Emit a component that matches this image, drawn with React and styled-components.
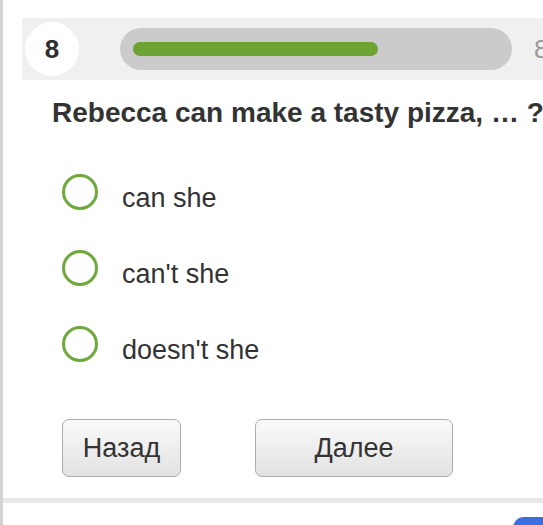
import React from "react";
import styled, { createGlobalStyle } from "styled-components";

const Global = createGlobalStyle`
  html, body { margin: 0; padding: 0; background: #fff; }
  body { font-family: "Liberation Sans", Arial, sans-serif; color: #333; }
`;

const Page = styled.div`
  border-left: 3px solid #d3d3d3;
  height: 525px;
  width: 543px;
  box-sizing: border-box;
  overflow: hidden;
  display: flex;
  flex-direction: column;
`;

const Header = styled.div`
  margin: 18px 0 0 19px;
  height: 62px;
  background: #f0f0f0;
  display: flex;
  align-items: center;
  padding-left: 3px;
  overflow: hidden;
  flex-shrink: 0;
`;

const Badge = styled.div`
  width: 54px;
  height: 54px;
  flex-shrink: 0;
  border-radius: 50%;
  background: #fff;
  display: flex;
  align-items: center;
  justify-content: center;
  font-size: 26px;
  font-weight: bold;
  color: #2e2e2e;
`;

const Track = styled.div`
  margin-left: 41px;
  width: 392px;
  height: 42px;
  flex-shrink: 0;
  box-sizing: border-box;
  border-radius: 21px;
  background: #cbcbcb;
  padding: 0 13px;
  display: flex;
  align-items: center;
`;

const Fill = styled.div`
  height: 14px;
  border-radius: 7px;
  background: #6ca333;
  width: ${(p) => p.$pct}%;
`;

const Total = styled.div`
  margin-left: 22px;
  font-size: 26px;
  color: #9a9a9a;
  white-space: nowrap;
  flex-shrink: 0;
`;

const Question = styled.div`
  margin: 17px 0 0 49px;
  font-size: 28px;
  font-weight: bold;
  line-height: 32px;
  white-space: nowrap;
  color: #333;
`;

const Options = styled.div`
  margin: 45px 0 0 59px;
  display: flex;
  flex-direction: column;
  gap: 34px;
`;

const Option = styled.label`
  display: flex;
  align-items: flex-start;
  gap: 24px;
  cursor: pointer;
`;

const Radio = styled.span`
  width: 36px;
  height: 36px;
  box-sizing: border-box;
  border: 3px solid #6fa83c;
  border-radius: 50%;
  flex-shrink: 0;
`;

const OptionText = styled.span`
  margin-top: 6px;
  font-size: 27px;
  line-height: 36px;
  color: #333;
`;

const Buttons = styled.div`
  margin: 51px 0 0 59px;
  display: flex;
  gap: 74px;
`;

const Button = styled.button`
  width: ${(p) => p.$w}px;
  height: 58px;
  box-sizing: border-box;
  border: 1.5px solid #adadad;
  border-radius: 7px;
  background: linear-gradient(#fafafa, #e2e2e2);
  font-family: "Liberation Sans", Arial, sans-serif;
  font-size: 27px;
  color: #333;
  padding: 0;
`;

const Divider = styled.div`
  margin-top: 21px;
  height: 5px;
  background: #e8e8e8;
  flex-shrink: 0;
`;

const Footer = styled.div`
  margin-top: 14px;
  display: flex;
  justify-content: flex-end;
`;

const BlueTab = styled.div`
  width: 30px;
  height: 20px;
  background: #3d6fe0;
  border-top-left-radius: 11px;
`;

const options = ["can she", "can't she", "doesn't she"];

export default function App() {
  return (
    <>
      <Global />
      <Page>
        <Header>
          <Badge>8</Badge>
          <Track>
            <Fill $pct={67} />
          </Track>
          <Total>8</Total>
        </Header>
        <Question>Rebecca can make a tasty pizza, … ?</Question>
        <Options>
          {options.map((o) => (
            <Option key={o}>
              <Radio />
              <OptionText>{o}</OptionText>
            </Option>
          ))}
        </Options>
        <Buttons>
          <Button $w={119}>Назад</Button>
          <Button $w={198}>Далее</Button>
        </Buttons>
        <Divider />
        <Footer>
          <BlueTab />
        </Footer>
      </Page>
    </>
  );
}
